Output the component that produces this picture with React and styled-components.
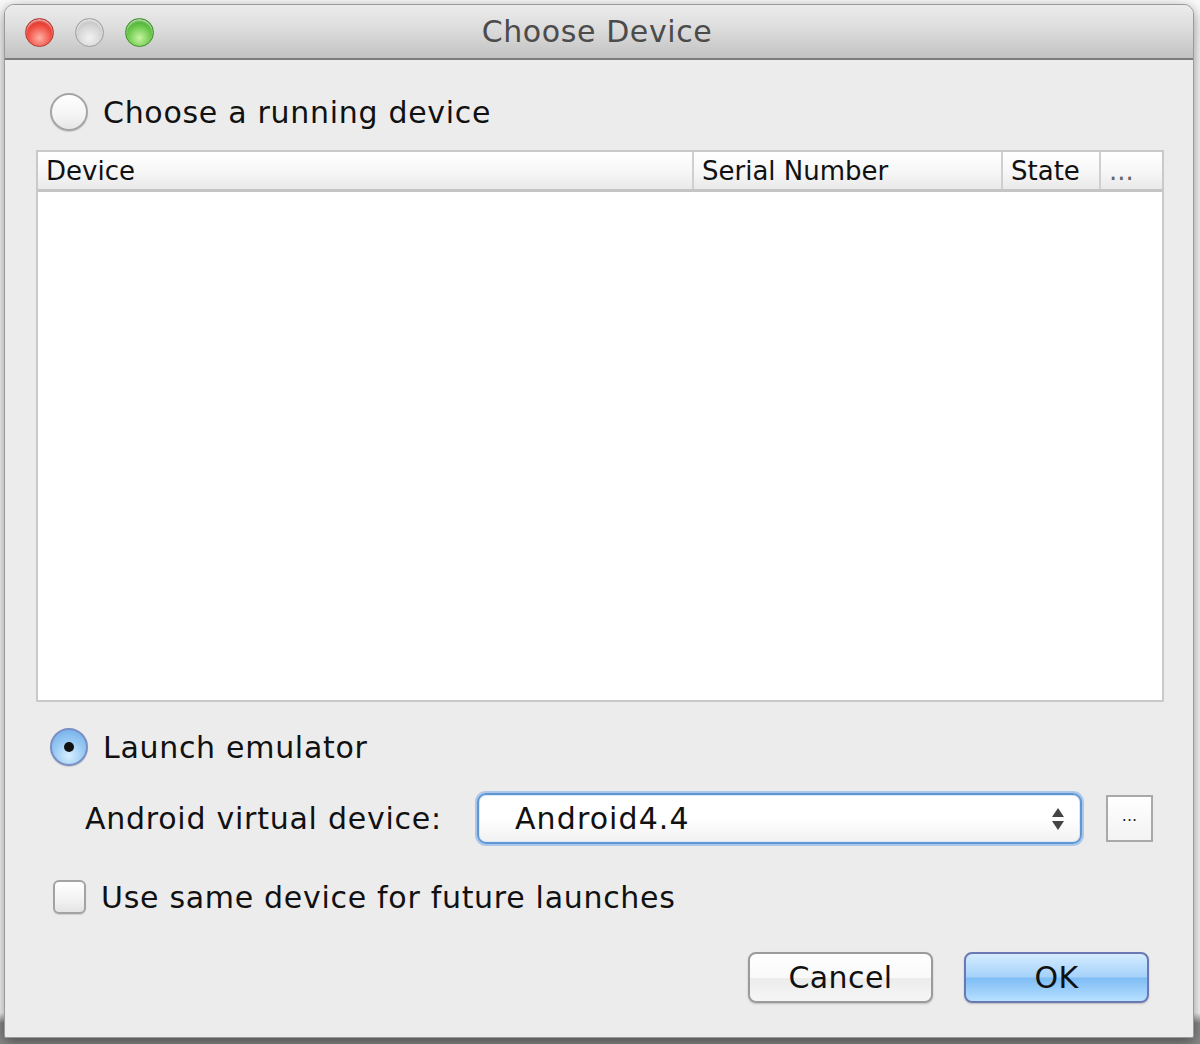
import React, { useState } from "react";
import styled, { createGlobalStyle } from "styled-components";

const GlobalStyle = createGlobalStyle`
  html, body {
    margin: 0;
    padding: 0;
  }
  body {
    font-family: "DejaVu Sans", "Liberation Sans", sans-serif;
    background: #f6f6f6;
  }
`;

const Page = styled.div`
  width: 1200px;
  height: 1044px;
  box-sizing: border-box;
  padding: 4px 6px 8px 4px;
  background: linear-gradient(to bottom, #fbfbfb 0%, #fbfbfb 97%, #8a8a8a 98%, #8a8a8a 100%);
  overflow: hidden;
`;

const Window = styled.div`
  height: 100%;
  display: flex;
  flex-direction: column;
  background: #ececec;
  border-radius: 10px 10px 2px 2px;
  border: 1px solid #9a9a9a;
  box-shadow: 0 4px 14px rgba(0, 0, 0, 0.45);
  overflow: hidden;
`;

const TitleBar = styled.div`
  position: relative;
  height: 53px;
  flex-shrink: 0;
  display: flex;
  align-items: center;
  justify-content: center;
  background: linear-gradient(to bottom, #ececec 0%, #dcdcdc 45%, #c2c2c2 100%);
  border-bottom: 2px solid #7c7c7c;
`;

const Lights = styled.div`
  position: absolute;
  left: 20px;
  top: 13px;
  display: flex;
  gap: 21px;
`;

const Light = styled.span`
  width: 29px;
  height: 29px;
  border-radius: 50%;
  box-sizing: border-box;
  border: 1px solid ${(p) => p.$edge};
  background: radial-gradient(circle at 50% 70%, ${(p) => p.$glow} 0%, ${(p) => p.$base} 55%, ${(p) => p.$dark} 100%);
  box-shadow: inset 0 2px 2px rgba(255, 255, 255, 0.6);
`;

const Title = styled.div`
  font-size: 30px;
  color: #4b4b4b;
  letter-spacing: 0.6px;
  margin-right: 4px;
`;

const Content = styled.div`
  flex: 1;
  display: flex;
  flex-direction: column;
  padding: 32px 29px 0 31px;
`;

const OptionRow = styled.label`
  display: flex;
  align-items: center;
  height: 40px;
  padding-left: 14px;
  margin-top: ${(p) => p.$top || 0}px;
  gap: ${(p) => p.$gap || 15}px;
  font-size: 30px;
  letter-spacing: 0.7px;
  color: #111;
  cursor: default;
`;

const Radio = styled.span`
  width: 38px;
  height: 38px;
  box-sizing: border-box;
  border-radius: 50%;
  display: flex;
  align-items: center;
  justify-content: center;
  border: 2px solid ${(p) => (p.$on ? "#7a8fc4" : "#a5a5a5")};
  background: ${(p) =>
    p.$on
      ? "radial-gradient(circle at 50% 75%, #d6eeff 0%, #98c9f3 50%, #6aa9e6 100%)"
      : "linear-gradient(to bottom, #ffffff 0%, #f4f4f4 60%, #e6e6e6 100%)"};
  box-shadow: 0 1px 1px rgba(0, 0, 0, 0.15);

  &::after {
    content: "";
    display: ${(p) => (p.$on ? "block" : "none")};
    width: 10px;
    height: 10px;
    border-radius: 50%;
    background: #111;
  }
`;

const Checkbox = styled.span`
  width: 33px;
  height: 34px;
  margin-left: 3px;
  box-sizing: border-box;
  border-radius: 6px;
  border: 2px solid #a3a3a3;
  background: linear-gradient(to bottom, #ffffff 0%, #f2f2f2 60%, #e4e4e4 100%);
  box-shadow: 0 1px 1px rgba(0, 0, 0, 0.12);
`;

const Table = styled.div`
  margin-top: 18px;
  height: 552px;
  box-sizing: border-box;
  border: 2px solid #c9c9c9;
  background: #fff;
  display: flex;
  flex-direction: column;
`;

const HeaderRow = styled.div`
  display: grid;
  grid-template-columns: 656px 309px 98px 1fr;
  height: 37px;
  background: linear-gradient(to bottom, #ffffff 0%, #f6f6f6 55%, #e9e9e9 100%);
  border-bottom: 3px solid #c4c4c4;
`;

const HeaderCell = styled.div`
  display: flex;
  align-items: center;
  padding-left: 8px;
  font-size: 26px;
  color: ${(p) => (p.$muted ? "#666" : "#111")};
  border-right: 2px solid #cfcfcf;
  &:last-child {
    border-right: none;
  }
`;

const TableBody = styled.div`
  flex: 1;
  background: #fff;
`;

const AvdRow = styled.div`
  display: flex;
  align-items: center;
  margin-top: 26px;
  padding-left: 49px;
`;

const AvdLabel = styled.span`
  font-size: 30px;
  letter-spacing: 0.75px;
  color: #111;
  width: 392px;
`;

const Select = styled.div`
  width: 605px;
  height: 51px;
  box-sizing: border-box;
  display: flex;
  align-items: center;
  justify-content: space-between;
  padding: 0 16px 0 36px;
  border-radius: 9px;
  border: 2px solid #5f97d4;
  box-shadow: 0 0 0 2px rgba(120, 170, 230, 0.55), inset 0 0 0 1px #dde8f5;
  background: linear-gradient(to bottom, #ffffff 0%, #ffffff 50%, #f1f1f1 100%);
  font-size: 30px;
  letter-spacing: 1.1px;
  color: #111;
`;

const Arrows = styled.span`
  display: flex;
  flex-direction: column;
  gap: 4px;

  &::before,
  &::after {
    content: "";
    width: 0;
    height: 0;
    border-left: 6px solid transparent;
    border-right: 6px solid transparent;
  }
  &::before {
    border-bottom: 9px solid #444;
  }
  &::after {
    border-top: 9px solid #444;
  }
`;

const SmallButton = styled.button`
  margin-left: 24px;
  width: 47px;
  height: 47px;
  box-sizing: border-box;
  border: 2px solid #a9a9a9;
  background: linear-gradient(to bottom, #ffffff 0%, #f3f3f3 100%);
  font-family: inherit;
  font-size: 16px;
  color: #222;
  padding: 0 0 6px;
`;

const ButtonRow = styled.div`
  display: flex;
  justify-content: flex-end;
  gap: 31px;
  margin-top: 35px;
  padding-right: 15px;
`;

const Button = styled.button`
  width: 185px;
  height: 51px;
  box-sizing: border-box;
  border-radius: 8px;
  font-family: inherit;
  font-size: 30px;
  letter-spacing: 0.4px;
  color: #111;
  border: 2px solid ${(p) => (p.$primary ? "#6b78b4" : "#9b9b9b")};
  background: ${(p) =>
    p.$primary
      ? "linear-gradient(to bottom, #d4ecff 0%, #a6d2fa 48%, #7fbdf5 52%, #b7e0ff 100%)"
      : "linear-gradient(to bottom, #ffffff 0%, #f9f9f9 50%, #ececec 52%, #f6f6f6 100%)"};
  box-shadow: 0 1px 2px rgba(0, 0, 0, 0.2);
`;

const columns = [
  { label: "Device" },
  { label: "Serial Number" },
  { label: "State" },
  { label: "...", muted: true },
];

export default function App() {
  const [mode, setMode] = useState("launch");
  const [sameDevice, setSameDevice] = useState(false);

  return (
    <>
      <GlobalStyle />
      <Page>
        <Window>
          <TitleBar>
            <Lights>
              <Light $edge="#b23a34" $glow="#ffb0a4" $base="#f0473b" $dark="#b31d14" />
              <Light $edge="#9d9d9d" $glow="#f2f2f2" $base="#d3d3d3" $dark="#a9a9a9" />
              <Light $edge="#3f8f2a" $glow="#c6f5a2" $base="#63c443" $dark="#2f8a1f" />
            </Lights>
            <Title>Choose Device</Title>
          </TitleBar>
          <Content>
            <OptionRow onClick={() => setMode("running")}>
              <Radio $on={mode === "running"} />
              Choose a running device
            </OptionRow>
            <Table>
              <HeaderRow>
                {columns.map((c) => (
                  <HeaderCell key={c.label} $muted={c.muted}>
                    {c.label}
                  </HeaderCell>
                ))}
              </HeaderRow>
              <TableBody />
            </Table>
            <OptionRow $top={25} onClick={() => setMode("launch")}>
              <Radio $on={mode === "launch"} />
              Launch emulator
            </OptionRow>
            <AvdRow>
              <AvdLabel>Android virtual device:</AvdLabel>
              <Select>
                Android4.4
                <Arrows />
              </Select>
              <SmallButton>...</SmallButton>
            </AvdRow>
            <OptionRow $top={33} $gap={15} onClick={() => setSameDevice(!sameDevice)}>
              <Checkbox />
              Use same device for future launches
            </OptionRow>
            <ButtonRow>
              <Button>Cancel</Button>
              <Button $primary>OK</Button>
            </ButtonRow>
          </Content>
        </Window>
      </Page>
    </>
  );
}
